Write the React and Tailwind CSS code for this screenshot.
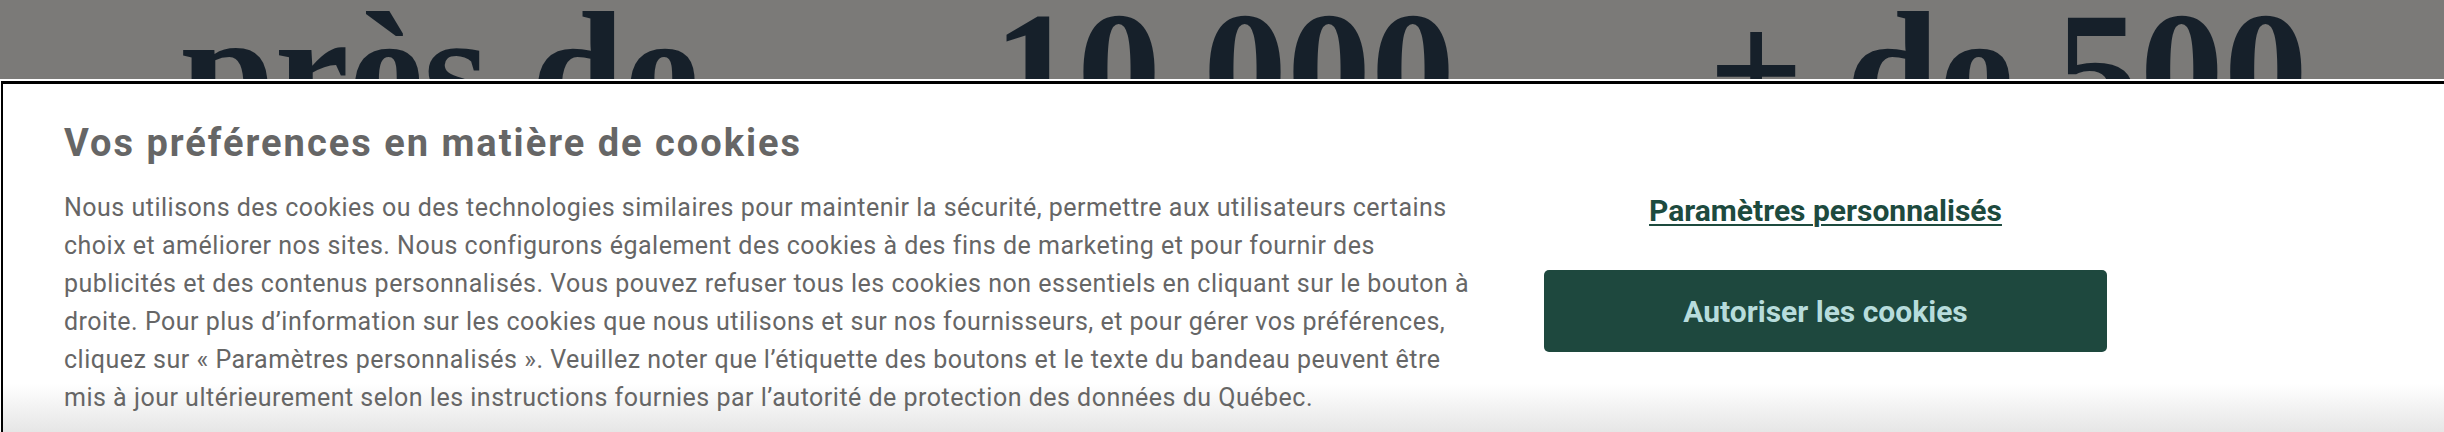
export default function App() {
  const stats = ['près de', '10 000', '+ de 500']
  const lines = [
    'Nous utilisons des cookies ou des technologies similaires pour maintenir la sécurité, permettre aux utilisateurs certains',
    'choix et améliorer nos sites. Nous configurons également des cookies à des fins de marketing et pour fournir des',
    'publicités et des contenus personnalisés. Vous pouvez refuser tous les cookies non essentiels en cliquant sur le bouton à',
    'droite. Pour plus d’information sur les cookies que nous utilisons et sur nos fournisseurs, et pour gérer vos préférences,',
    'cliquez sur « Paramètres personnalisés ». Veuillez noter que l’étiquette des boutons et le texte du bandeau peuvent être',
    'mis à jour ultérieurement selon les instructions fournies par l’autorité de protection des données du Québec.',
  ]

  return (
    <div className="h-[432px] w-[2444px] overflow-hidden bg-white font-['Roboto',sans-serif]">
      <div className="flex h-[79px] overflow-hidden bg-[#7b7a78] pl-[48px]">
        {stats.map((s) => (
          <div
            key={s}
            className="w-[784px] shrink-0 text-center font-['Liberation_Serif',serif] text-[168px] font-bold leading-none whitespace-nowrap text-[#16202a] -mt-[14px]"
          >
            {s}
          </div>
        ))}
      </div>

      <div className="bg-white pt-[2px] pl-[1px]">
        <div className="h-[351px] border-t-[3px] border-l-2 border-black bg-[linear-gradient(to_bottom,#ffffff_0%,#ffffff_86%,#e6e6e6_100%)] pl-[61px] pt-[37px]">
          <div className="flex">
            <div className="w-[1412px] shrink-0">
              <h2 className="text-[38px] font-bold leading-[44px] tracking-[2px] text-[#666666]">
                Vos préférences en matière de cookies
              </h2>
              <p className="mt-[24px] text-[25px] leading-[38px] tracking-[0.5px] text-[#666666]">
                {lines.map((l) => (
                  <span key={l} className="block whitespace-nowrap">
                    {l}
                  </span>
                ))}
              </p>
            </div>

            <div className="ml-[68px] mt-[72px] flex w-[563px] shrink-0 flex-col items-center">
              <a href="#" className="text-[30px] font-bold leading-[36px] text-[#1d4a3e] underline decoration-2 underline-offset-[3px]">
                Paramètres personnalisés
              </a>
              <button className="mt-[41px] h-[82px] w-[563px] rounded-[5px] bg-[#1e483e] text-[30px] font-bold text-[#b7dcdc]">
                Autoriser les cookies
              </button>
            </div>
          </div>
        </div>
      </div>
    </div>
  )
}
